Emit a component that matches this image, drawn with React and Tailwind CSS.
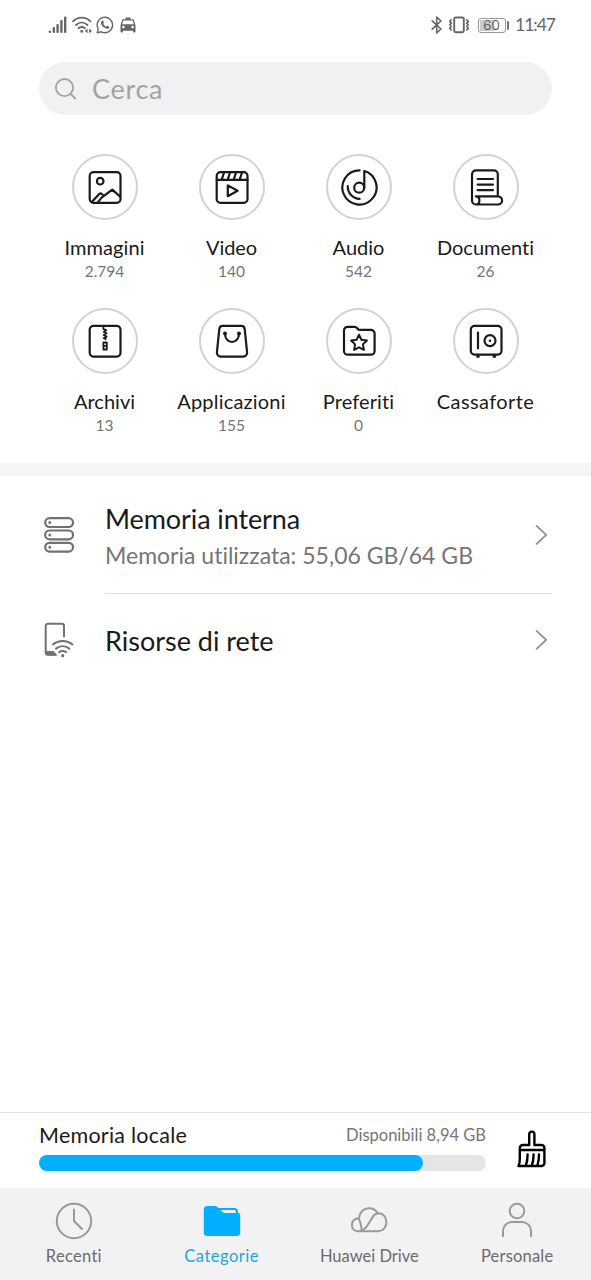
import { MdLocalTaxi } from "react-icons/md";

const stroke = {
  fill: "none",
  stroke: "currentColor",
  strokeLinecap: "round",
  strokeLinejoin: "round",
};

const categories = [
  {
    label: "Immagini",
    count: "2.794",
    tracking: "tracking-[0.1px]",
    icon: (
      <>
        <rect x="4.7" y="5.2" width="30.8" height="30.6" rx="3.8" />
        <circle cx="15.2" cy="14.2" r="3.3" />
        <path d="M7.2 34.6 14 27.2q1.4-1.5 2.8-.2l2 1.8M12.6 35.6l4-5L27.2 22.6l8 7" />
      </>
    ),
  },
  {
    label: "Video",
    count: "140",
    tracking: "tracking-[-0.1px]",
    icon: (
      <>
        <rect x="4.7" y="5.2" width="30.8" height="30.6" rx="3.8" />
        <path d="M4.7 12.8h30.8M12 5.5 9.8 12.4M18 5.5l-2.2 6.9M24 5.5l-2.2 6.9M30 5.5l-2.2 6.9M15.8 18.4v10.8l9.8-5.4z" />
      </>
    ),
  },
  {
    label: "Audio",
    count: "542",
    tracking: "tracking-[0px]",
    icon: (
      <>
        <path d="M20.6 3.3A17.1 17.1 0 1 0 25.3 4v16.7" />
        <circle cx="20.2" cy="20.7" r="5" />
        <path d="M8.8 19.2a12.2 12.2 0 0 0 11.8 12.7" />
      </>
    ),
  },
  {
    label: "Documenti",
    count: "26",
    tracking: "tracking-[0px]",
    icon: (
      <>
        <path d="M31.8 29V7.3a4 4 0 0 0-4-4H10a4 4 0 0 0-4 4v26.2a4 4 0 0 0 4 4h22a4 4 0 0 0 0-8.2H9.8c2.2 0 3.6 1.6 3.6 4s-1.4 4.2-3.4 4.2" />
        <path d="M11.6 12H27M11.6 17.6H27M11.6 23.1H27" />
      </>
    ),
  },
  {
    label: "Archivi",
    count: "13",
    tracking: "tracking-[0px]",
    icon: (
      <>
        <rect x="4.7" y="4.8" width="30.8" height="30.8" rx="3.8" />
        <path strokeWidth="1.8" strokeLinecap="butt" d="M18.4 5v3.2l3 .9-2.6 1.8 2.8 1.4-2.8 1.8 2.8 1.5-2.8 1.6 2.6 1.2" />
        <path strokeWidth="1.8" d="M18.4 21.5h3.4v7h-3.4zM18.4 24.9h3.4" />
      </>
    ),
  },
  {
    label: "Applicazioni",
    count: "155",
    tracking: "tracking-[0.2px]",
    icon: (
      <>
        <path d="M10.8 4.8h18.4a3.5 3.5 0 0 1 3.5 3.3l2.4 23.3a3.8 3.8 0 0 1-3.8 4.2H8.7a3.8 3.8 0 0 1-3.8-4.2L7.3 8.1a3.5 3.5 0 0 1 3.5-3.3z" />
        <path d="M13 12.5c0 5 3 8.5 7 8.5s7-3.5 7-8.5" />
        <path strokeWidth="4" d="M13 12.6h0M27 12.6h0" />
      </>
    ),
  },
  {
    label: "Preferiti",
    count: "0",
    tracking: "tracking-[0.1px]",
    icon: (
      <>
        <path d="M5 9.5a3.7 3.7 0 0 1 3.7-3.7h6.8c3 0 2.7 3.1 5.2 3.1h11.2a3.7 3.7 0 0 1 3.7 3.7V30a3.7 3.7 0 0 1-3.7 3.7H8.7A3.7 3.7 0 0 1 5 30z" />
        <path strokeWidth="2" d="m20 13.7 2.4 5 5.5.8-4 3.9 1 5.5-4.9-2.6-4.9 2.6 1-5.5-4-3.9 5.5-.8z" />
      </>
    ),
  },
  {
    label: "Cassaforte",
    tracking: "tracking-[0.4px]",
    icon: (
      <>
        <rect x="4.8" y="4.8" width="30.7" height="28.8" rx="3.8" />
        <path d="M12 11.5v15.8" />
        <circle cx="24" cy="19.7" r="5.5" />
        <path strokeWidth="2.6" d="M24 19.7h0" />
        <path strokeWidth="3.2" strokeLinecap="butt" d="M12 34v2.8M28.3 34v2.8" />
      </>
    ),
  },
];

function StatusBar() {
  return (
    <div className="flex h-[50px] shrink-0 items-center pl-[48px] pr-[37px] text-[#666]">
      <svg width="19" height="18" viewBox="0 0 19 18" fill="currentColor">
        <rect x="0.6" y="14.5" width="2.4" height="2.5" rx="1" />
        <rect x="4.6" y="11" width="2.4" height="6" rx="1" />
        <rect x="8.4" y="8" width="2.4" height="9" rx="1" />
        <rect x="12.2" y="4" width="2.4" height="13" rx="1" />
        <rect x="16" y="0.6" width="2.4" height="16.4" rx="1" />
      </svg>
      <svg className="ml-[5px]" width="20" height="18" viewBox="0 0 20 18" {...stroke} strokeWidth="1.8">
        <path d="M1 5.3c5-4.9 12.5-4.9 17.5 0M4 9c3.5-3.2 8-3.2 11.5 0M6.6 12.3c2-1.6 4.3-1.6 6.3 0" />
        <path fill="currentColor" stroke="none" d="M8.2 15.2a1.5 1.5 0 1 0 3 0 1.5 1.5 0 1 0-3 0M12.8 14.9l2.8-2.4v4.8zM20 14.9l-2.8-2.4v4.8z" />
      </svg>
      <svg className="ml-[4px]" width="18" height="18" viewBox="0 0 18 18" {...stroke} strokeWidth="1.4">
        <path d="M1.2 16.8l1-4A7.7 7.7 0 1 1 5.3 15.8z" />
        <path fill="currentColor" stroke="none" d="M5.8 4.9c.7-.7 1.3-.4 1.5.2l.6 1.4c.1.5-.5 1-.7 1.3.7 1.5 1.7 2.3 3 2.9.4-.4.8-1.1 1.3-.9l1.5.7c.6.3.3 1.3-.2 1.8-1.2 1-3.2.4-5-1C5.6 9.7 4 6.7 5.8 4.9z" />
      </svg>
      <MdLocalTaxi className="ml-[4px]" size={20} />
      <div className="grow" />
      <svg width="12" height="18" viewBox="0 0 12 18" {...stroke} strokeWidth="1.6">
        <path d="M1.2 4.8 10 13l-4.3 4V1L10 5l-8.8 8.2" />
      </svg>
      <svg className="ml-[5px]" width="22" height="18" viewBox="0 0 22 18" {...stroke} strokeWidth="1.7">
        <rect x="6.2" y="1.5" width="9.6" height="14.8" rx="1.5" strokeWidth="1.9" />
        <path d="M3.2 3.8 1.8 5.4l1.4 1.7-1.4 1.7 1.4 1.7-1.4 1.7 1.4 1.7M18.8 3.8l1.4 1.6-1.4 1.7 1.4 1.7-1.4 1.7 1.4 1.7-1.4 1.7" />
      </svg>
      <div className="ml-[8px] h-[15px] w-[28px] shrink-0 rounded-[3px] border border-[#999] p-px">
        <div className="h-full bg-linear-to-r from-[#cbcbcb] from-60% to-white to-60% text-center font-['Inter',sans-serif] text-[13.5px] leading-[11px] font-light text-[#444]">
          60
        </div>
      </div>
      <div className="ml-[1.5px] h-[9px] w-[2px] shrink-0 rounded-full bg-[#777]" />
      <span className="ml-[6px] w-[39px] shrink-0 whitespace-nowrap text-[17.5px] leading-none tracking-[-1px]">11:47</span>
    </div>
  );
}

function Category({ label, count, tracking, icon }) {
  return (
    <div className="flex h-[154px] flex-col items-center">
      <div className="flex size-[66px] shrink-0 items-center justify-center rounded-full border-2 border-[#d2d2d2]">
        <svg className="shrink-0" width="40" height="40" viewBox="0 0 40 40" {...stroke} strokeWidth="2.2">
          {icon}
        </svg>
      </div>
      <div className={`mt-[14px] whitespace-nowrap text-[20px] leading-[26px] ${tracking}`}>{label}</div>
      <div className="text-[15.5px] leading-[22px] text-[#757575]">{count}</div>
    </div>
  );
}

function Chevron() {
  return (
    <svg className="mr-[4px] shrink-0 text-[#929292]" width="13" height="22" viewBox="0 0 13 22" {...stroke} strokeWidth="1.9">
      <path d="m1.6 1.9 9.6 9-9.6 9" />
    </svg>
  );
}

function StorageList() {
  return (
    <section className="shrink-0 pl-[44px] pr-[39px]">
      <div className="flex h-[117px] items-center">
        <svg className="shrink-0 text-[#717171]" width="30" height="36" viewBox="0 0 30 36" {...stroke} strokeWidth="2.2">
          <rect x="1.2" y="1.2" width="27.8" height="8.8" rx="4.4" />
          <rect x="1.2" y="13.5" width="27.8" height="8.8" rx="4.4" />
          <rect x="1.2" y="25.8" width="27.8" height="8.8" rx="4.4" />
          <path strokeWidth="3" d="M5.8 5.6h0M5.8 17.9h0M5.8 30.2h0" />
        </svg>
        <div className="ml-[31px] grow pt-[3px]">
          <div className="text-[27px] leading-[36px] tracking-[-0.1px]">Memoria interna</div>
          <div className="mt-[1px] text-[23px] leading-[34px] text-[#757575]">Memoria utilizzata: 55,06 GB/64 GB</div>
        </div>
        <Chevron />
      </div>
      <div className="ml-[61px] h-px bg-[#e3e3e3]" />
      <div className="flex h-[92px] items-center">
        <svg className="shrink-0 text-[#717171]" width="30" height="36" viewBox="0 0 30 36" {...stroke} strokeWidth="2">
          <path d="M12 32.8H4a2.3 2.3 0 0 1-2.3-2.3V4A2.3 2.3 0 0 1 4 1.7h13.7A2.3 2.3 0 0 1 20 4v11" strokeLinecap="butt" />
          <path fill="currentColor" stroke="none" d="M1.5 29H9.5l4 4.6H4a3 3 0 0 1-2.5-3z" />
          <path d="M8.8 22.5c6-4.7 13.7-4.7 19.7 0M12 26.6c4-3.2 9.3-3.2 13.3 0M15.2 30.2c2.2-1.5 4.7-1.5 6.9 0" />
          <path strokeWidth="3.2" d="M18.7 33.7h0" />
        </svg>
        <div className="ml-[31px] grow pt-[1px] text-[27px] leading-[36px]">Risorse di rete</div>
        <Chevron />
      </div>
    </section>
  );
}

function LocalMemory() {
  return (
    <section className="flex h-[76px] shrink-0 border-t border-[#e3e3e3] pl-[39px]">
      <div className="w-[447px]">
        <div className="flex h-[42px] items-center justify-between pt-[2px]">
          <span className="text-[21.5px] tracking-[0.25px]">Memoria locale</span>
          <span className="text-[16.5px] text-[#757575]">Disponibili 8,94 GB</span>
        </div>
        <div className="h-[16px] rounded-full bg-[#e5e5e5]">
          <div className="h-full rounded-full bg-[#00b0ff]" style={{ width: "86%" }} />
        </div>
      </div>
      <svg className="ml-[30px] mt-[17px] text-black" width="30" height="38" viewBox="0 0 30 38" {...stroke} strokeWidth="2.4">
        <path d="M13.2 15V4.2a2.6 2.6 0 0 1 5.2 0V15h7a3 3 0 0 1 3 3v15.3a2.7 2.7 0 0 1-2.7 2.7H2.5c1-2 1.3-4.3 1.3-7V18a3 3 0 0 1 3-3zM3.8 20h24.6" />
        <path d="M11.6 24.5c0 4-.3 7-1.8 11M17.6 24.5c0 4-.3 7-1.8 11M23 24.5c0 4-.3 7-1.6 11" />
      </svg>
    </section>
  );
}

const tabs = [
  {
    label: "Recenti",
    tracking: "tracking-[0.3px]",
    icon: (
      <>
        <circle cx="20" cy="20" r="17.2" />
        <path d="M20 8.5V20l8 8" />
      </>
    ),
  },
  {
    label: "Categorie",
    active: true,
    tracking: "tracking-[0.5px]",
    icon: (
      <g stroke="none" fill="currentColor">
        <path d="M1.8 8.5A3.5 3.5 0 0 1 5.3 5h7c2 0 3 .7 4.2 2h16a3.5 3.5 0 0 1 3.4 4.2 3.5 3.5 0 0 1 2.3 3.3v17a3.5 3.5 0 0 1-3.5 3.5H5.3a3.5 3.5 0 0 1-3.5-3.5z" />
        <path fill="#f2f2f2" d="M19.2 8.9h13c1 0 1.6.8 1.6 2v1H22.5c-1.5 0-2.2-1.4-3.3-3z" />
      </g>
    ),
  },
  {
    label: "Huawei Drive",
    tracking: "tracking-[0px]",
    icon: (
      <>
        <path d="M9.5 17.3c-4 0-6.600 3-6.600 6.600 0 3.9 2.6 6.3 6.3 6.3 4.3 0 6.600-1.800 9-5.400l5.600-8.900c1.500-2.500 3.300-3.600 6-3.600 4.400 0 7.600 3.800 7.600 8.900 0 5.300-3.400 9-8.300 9H10" />
        <path d="M10.2 17c.3-5.7 4.3-9.8 9.9-9.8 4 0 6.900 1.900 8.500 5.200M9.600 17.500c2 2.800 2.500 6.800 3.200 11.700" />
      </>
    ),
  },
  {
    label: "Personale",
    tracking: "tracking-[0.2px]",
    icon: (
      <>
        <circle cx="20" cy="10" r="7.3" />
        <path d="M6 35.3V30a9 9 0 0 1 9-9h10a9 9 0 0 1 9 9v5.300" />
      </>
    ),
  },
];

export default function App() {
  return (
    <div className="flex h-[1280px] w-[591px] flex-col overflow-hidden bg-white font-['Lato',sans-serif] text-[#1a1a1a] [font-variant-ligatures:none]">
      <StatusBar />
      <div className="mx-[39px] mt-[12px] flex h-[53px] shrink-0 items-center rounded-full bg-[#f1f1f1] pl-[15px] text-[#a3a3a3]">
        <svg width="23" height="23" viewBox="0 0 23 23" {...stroke} strokeWidth="1.8">
          <circle cx="10.5" cy="10.6" r="8.6" />
          <path d="m16.8 17 4.4 4.5" />
        </svg>
        <span className="ml-[15px] text-[27px] leading-none tracking-[0.7px]">Cerca</span>
      </div>
      <div className="mt-[39px] grid h-[309px] shrink-0 grid-cols-4 content-start pl-[41px] pr-[42px]">
        {categories.map((category) => (
          <Category key={category.label} {...category} />
        ))}
      </div>
      <div className="h-[13px] shrink-0 bg-[#f6f6f6]" />
      <StorageList />
      <div className="grow" />
      <LocalMemory />
      <nav className="grid h-[92px] shrink-0 grid-cols-4 bg-[#f2f2f2]">
        {tabs.map((tab) => (
          <div key={tab.label} className="flex flex-col items-center pt-[13px]">
            <svg className={tab.active ? "text-[#00b0ff]" : "text-[#999]"} width="40" height="40" viewBox="0 0 40 40" {...stroke} strokeWidth="2">
              {tab.icon}
            </svg>
            <span className={`mt-[3px] text-[16.5px] leading-[24px] ${tab.tracking} ${tab.active ? "text-[#22a6e0]" : "text-[#6b6b6b]"}`}>{tab.label}</span>
          </div>
        ))}
      </nav>
    </div>
  );
}
